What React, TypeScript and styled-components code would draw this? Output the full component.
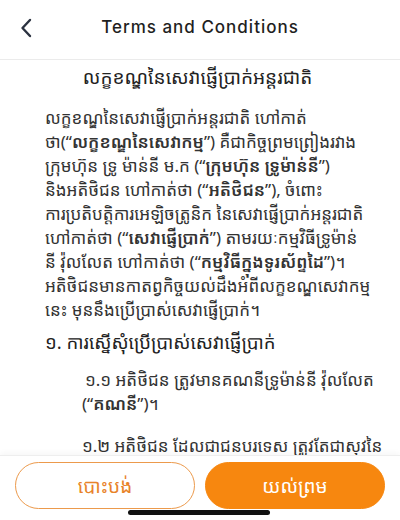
import React from 'react'
import styled, { createGlobalStyle } from 'styled-components'

const GlobalStyle = createGlobalStyle`
    html, body {
        margin: 0;
        padding: 0;
        background: #ffffff;
    }
    #root {
        width: 400px;
        height: 520px;
    }
`

const KHMER = `"Khmer OS", "Khmer OS System", "Noto Sans Khmer", "Noto Sans", "DejaVu Sans", sans-serif`

const Screen = styled.div`
    width: 400px;
    height: 520px;
    display: flex;
    flex-direction: column;
    background: #ffffff;
    overflow: hidden;
`

const Header = styled.div`
    height: 59px;
    flex-shrink: 0;
    display: flex;
    align-items: center;
    justify-content: center;
    position: relative;
    border-bottom: 1px solid #ebebeb;
`

const BackButton = styled.button`
    position: absolute;
    left: 14px;
    top: 14px;
    width: 24px;
    height: 28px;
    padding: 0;
    border: none;
    background: none;
    display: flex;
    align-items: center;
    justify-content: center;
    color: #2b3240;
`

const Title = styled.h1`
    margin: 0;
    margin-top: -6px;
    font-family: Inter, 'Liberation Sans', sans-serif;
    font-size: 17px;
    font-weight: 500;
    letter-spacing: 1px;
    color: #1f1f1f;
`

const Content = styled.div`
    flex: 1;
    overflow: hidden;
    padding: 4px 30px 0 45px;
    font-family: ${KHMER};
    color: #333333;
`

const DocTitle = styled.h2`
    margin: 0 0 16px -20px;
    text-align: center;
    font-size: 19px;
    font-weight: 400;
    line-height: 26px;
    color: #222222;
`

const Paragraph = styled.div<{ $indent?: number; $gap?: number }>`
    font-size: 17px;
    line-height: 24px;
    padding-left: ${({ $indent }) => $indent ?? 0}px;
    margin-bottom: ${({ $gap }) => $gap ?? 0}px;
`

const Line = styled.span<{ $shift?: number }>`
    display: block;
    white-space: nowrap;
    margin-left: ${({ $shift }) => $shift ?? 0}px;
`

const Strong = styled.b`
    font-weight: 600;
`

const SectionTitle = styled.h3`
    margin: 0 0 12px;
    font-size: 18.5px;
    font-weight: 400;
    line-height: 28px;
    color: #222222;
`

const Footer = styled.div`
    height: 65px;
    flex-shrink: 0;
    background: #ffffff;
    border-top: 1px solid #eeeeee;
    box-shadow: 0 -2px 6px rgba(0, 0, 0, 0.04);
    display: flex;
    flex-direction: column;
    align-items: center;
    padding-top: 6px;
    box-sizing: border-box;
    position: relative;
`

const ButtonRow = styled.div`
    width: 100%;
    display: flex;
    gap: 10px;
    padding: 0 15px;
    box-sizing: border-box;
`

const ActionButton = styled.button<{ $primary?: boolean }>`
    flex: 1;
    height: 47px;
    border-radius: 24px;
    border: 1.5px solid ${({ $primary }) => ($primary ? '#f7870f' : '#ec9a4c')};
    background: ${({ $primary }) => ($primary ? '#f7870f' : '#ffffff')};
    color: ${({ $primary }) => ($primary ? '#ffffff' : '#e8832a')};
    font-family: ${KHMER};
    font-size: 19px;
    line-height: 26px;
    padding: 0;
`

const HomeIndicator = styled.div`
    position: absolute;
    bottom: 5px;
    left: 128px;
    width: 142px;
    height: 5px;
    border-radius: 3px;
    background: #111111;
`

function ChevronLeft() {
    return (
        <svg width="14" height="22" viewBox="0 0 14 22" fill="none">
            <path d="M11 3L3.5 11L11 19" stroke="currentColor" strokeWidth="2.4" strokeLinecap="round" strokeLinejoin="round" />
        </svg>
    )
}

export default function App() {
    return (
        <>
            <GlobalStyle />
            <Screen>
                <Header>
                    <BackButton aria-label="back">
                        <ChevronLeft />
                    </BackButton>
                    <Title>Terms and Conditions</Title>
                </Header>

                <Content>
                    <DocTitle>លក្ខខណ្ឌនៃសេវាផ្ញើប្រាក់អន្តរជាតិ</DocTitle>

                    <Paragraph $gap={6}>
                        <Line>លក្ខខណ្ឌនៃសេវាផ្ញើប្រាក់អន្តរជាតិ ហៅកាត់</Line>
                        <Line>
                            ថា(“<Strong>លក្ខខណ្ឌនៃសេវាកម្ម</Strong>”) គឺជាកិច្ចព្រមព្រៀងរវាង
                        </Line>
                        <Line>
                            ក្រុមហ៊ុន ទ្រូ ម៉ាន់នី ម.ក (“<Strong>ក្រុមហ៊ុន ទ្រូម៉ាន់នី</Strong>”)
                        </Line>
                        <Line>
                            និងអតិថិជន ហៅកាត់ថា (“<Strong>អតិថិជន</Strong>”), ចំពោះ
                        </Line>
                        <Line>ការប្រតិបត្តិការអេឡិចត្រូនិក នៃសេវាផ្ញើប្រាក់អន្តរជាតិ</Line>
                        <Line>
                            ហៅកាត់ថា (“<Strong>សេវាផ្ញើប្រាក់</Strong>”) តាមរយៈកម្មវិធីទ្រូម៉ាន់
                        </Line>
                        <Line>
                            នី វ៉ុលលែត ហៅកាត់ថា (“<Strong>កម្មវិធីក្នុងទូរស័ព្ទដៃ</Strong>”)។
                        </Line>
                        <Line>អតិថិជនមានកាតព្វកិច្ចយល់ដឹងអំពីលក្ខខណ្ឌសេវាកម្ម</Line>
                        <Line>នេះ មុននឹងប្រើប្រាស់សេវាផ្ញើប្រាក់។</Line>
                    </Paragraph>

                    <SectionTitle>១. ការស្នើសុំប្រើប្រាស់សេវាផ្ញើប្រាក់</SectionTitle>

                    <Paragraph $indent={37} $gap={18}>
                        <Line $shift={3}>១.១ អតិថិជន ត្រូវមានគណនីទ្រូម៉ាន់នី វ៉ុលលែត</Line>
                        <Line>
                            (“<Strong>គណនី</Strong>”)។
                        </Line>
                    </Paragraph>

                    <Paragraph $indent={37}>
                        <Line>១.២ អតិថិជន ដែលជាជនបរទេស ត្រូវតែជាសុវនៃ</Line>
                    </Paragraph>
                </Content>

                <Footer>
                    <ButtonRow>
                        <ActionButton>បោះបង់</ActionButton>
                        <ActionButton $primary>យល់ព្រម</ActionButton>
                    </ButtonRow>
                    <HomeIndicator />
                </Footer>
            </Screen>
        </>
    )
}
